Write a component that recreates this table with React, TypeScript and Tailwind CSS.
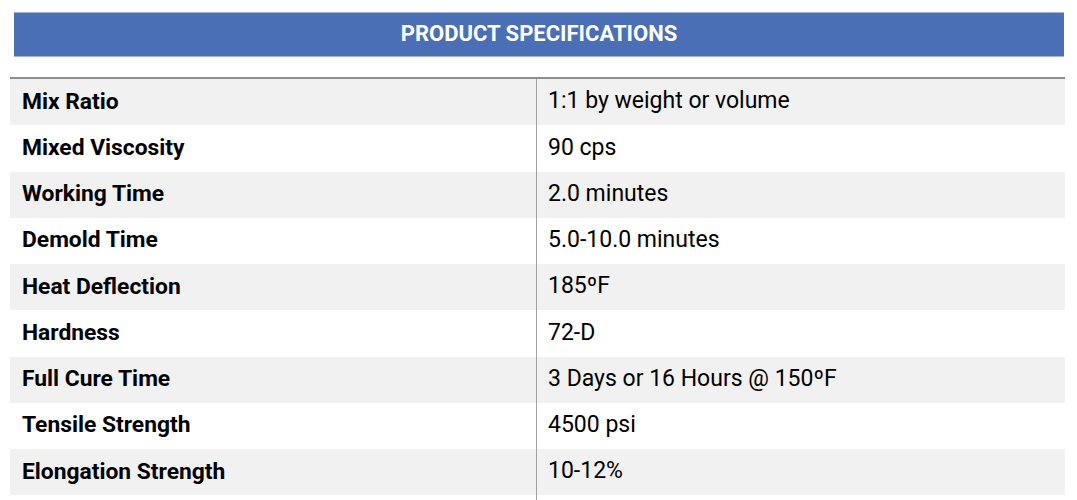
const specs: [string, string][] = [
  ["Mix Ratio", "1:1 by weight or volume"],
  ["Mixed Viscosity", "90 cps"],
  ["Working Time", "2.0 minutes"],
  ["Demold Time", "5.0-10.0 minutes"],
  ["Heat Deflection", "185ºF"],
  ["Hardness", "72-D"],
  ["Full Cure Time", "3 Days or 16 Hours @ 150ºF"],
  ["Tensile Strength", "4500 psi"],
  ["Elongation Strength", "10-12%"],
  ["", ""],
]

export default function App() {
  return (
    <div className="h-[500px] w-[1077px] overflow-hidden bg-white font-['Roboto',sans-serif] text-black">
      <div className="ml-[14px] mt-[12px] flex h-[45px] w-[1050px] items-center justify-center border-y border-[#9db4df] bg-[#4a6fb4] pb-[3px]">
        <h2 className="text-[22px] font-bold text-white">PRODUCT SPECIFICATIONS</h2>
      </div>

      <div className="ml-[10px] mt-[20px] w-[1055px] border-t-2 border-[#8e8e8e]">
        {specs.map(([label, value], i) => (
          <div
            key={i}
            className={`flex h-[46.25px] items-center ${i % 2 === 0 ? "bg-[#f1f1f1]" : "bg-white"}`}
          >
            <div className="flex h-full w-[527px] items-center border-r border-[#a0a0a0] pb-[1px] pl-[12px] text-[22.8px] font-bold">
              {label}
            </div>
            <div className="pb-[1px] pl-[11px] text-[23px]">{value}</div>
          </div>
        ))}
      </div>
    </div>
  )
}
